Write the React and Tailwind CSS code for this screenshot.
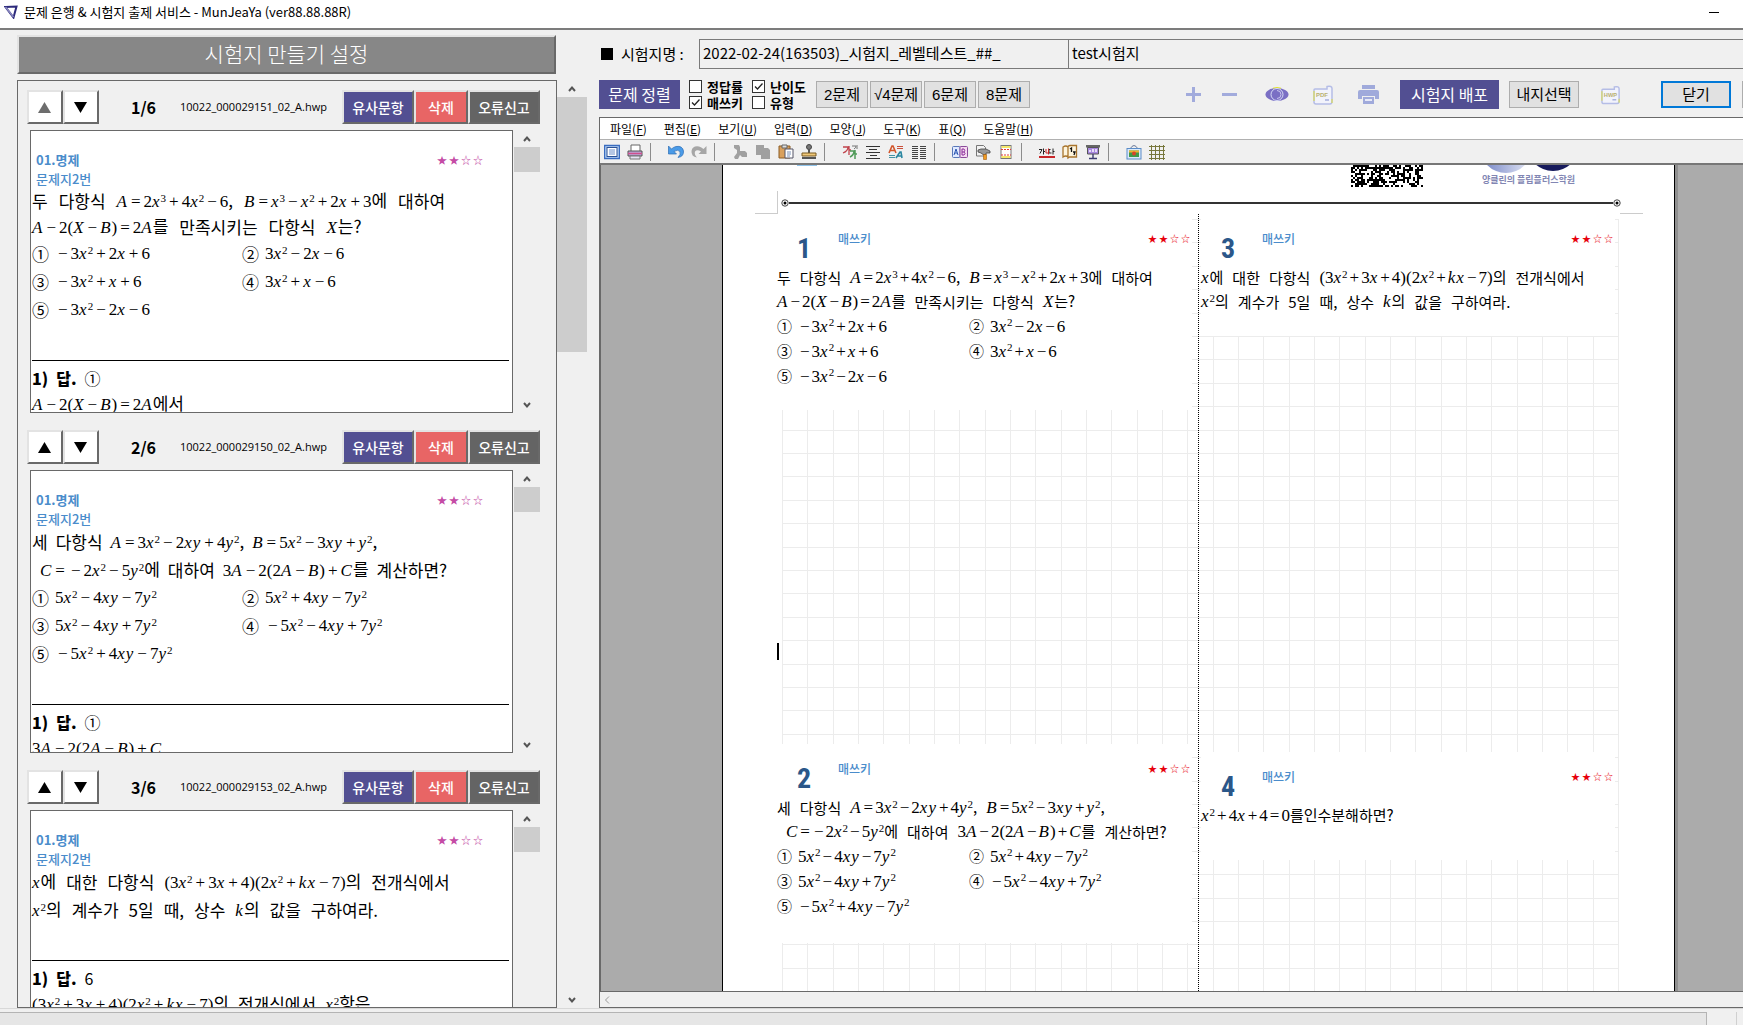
import React from "react";

const UI = "font-['Noto_Sans_CJK_KR','Noto_Sans',sans-serif]";

/* ---------- math text ---------- */

function MathRun({ src, op }) {
  const out = [];
  for (let i = 0; i < src.length; i++) {
    const c = src[i];
    if (c === "^") {
      i++;
      out.push(
        <sup key={i} className="text-[11px]">
          {src[i]}
        </sup>
      );
    } else if (/[A-Za-z]/.test(c)) {
      out.push(
        <i key={i} className="pr-px">
          {c}
        </i>
      );
    } else if ("+-=".includes(c)) {
      out.push(
        <span key={i} className={op}>
          {c === "-" ? "−" : c}
        </span>
      );
    } else {
      out.push(c);
    }
  }
  return <span className="font-['Liberation_Serif',serif] text-[17px]">{out}</span>;
}

/* Words are separated by spaces; {…} marks a formula. */
function Line({ text, op, className = "" }) {
  return (
    <p className={"flex items-center whitespace-nowrap " + className}>
      {text.split(" ").map((w, i) => (
        <span key={i}>
          {w.split(/[{}]/).map((part, j) => (j % 2 ? <MathRun key={j} src={part} op={op} /> : part))}
        </span>
      ))}
    </p>
  );
}

const CIRCLED = ["①", "②", "③", "④", "⑤"];

function Options({ items, op, className }) {
  return (
    <ol className={"grid " + className}>
      {items.map((t, i) => (
        <li key={i} className="flex items-center gap-[6px] whitespace-nowrap">
          <span>{CIRCLED[i]}</span>
          <MathRun src={t} op={op} />
        </li>
      ))}
    </ol>
  );
}

function Stars({ className }) {
  return (
    <span className={"flex gap-[2px] leading-4 " + className} aria-label="난이도 2">
      {["★", "★", "☆", "☆"].map((s, i) => (
        <span key={i}>{s}</span>
      ))}
    </span>
  );
}

const Q1 = {
  lines: ["두 다항식 {A=2x^3+4x^2-6}, {B=x^3-x^2+2x+3}에 대하여", "{A-2(X-B)=2A}를 만족시키는 다항식 {X}는?"],
  options: ["-3x^2+2x+6", "3x^2-2x-6", "-3x^2+x+6", "3x^2+x-6", "-3x^2-2x-6"],
};
const Q2 = {
  lines: ["세 다항식 {A=3x^2-2xy+4y^2}, {B=5x^2-3xy+y^2},", " {C=-2x^2-5y^2}에 대하여 {3A-2(2A-B)+C}를 계산하면?"],
  options: ["5x^2-4xy-7y^2", "5x^2+4xy-7y^2", "5x^2-4xy+7y^2", "-5x^2-4xy+7y^2", "-5x^2+4xy-7y^2"],
};
const Q3 = {
  lines: ["{x}에 대한 다항식 {(3x^2+3x+4)(2x^2+kx-7)}의 전개식에서", "{x^2}의 계수가 5일 때, 상수 {k}의 값을 구하여라."],
  options: [],
};
const Q4 = { lines: ["{x^2+4x+4=0}를인수분해하면?"], options: [] };

/* ---------- left panel ---------- */

const BEVEL = "border-2 border-t-[#e3e3e3] border-l-[#e3e3e3] border-r-[#696969] border-b-[#696969]";

function Chevron({ down }) {
  return (
    <svg width="8" height="6" viewBox="0 0 8 6" fill="none" stroke="#555" strokeWidth="2">
      <path d={down ? "M1 1l3 3.4L7 1" : "M1 5l3-3.4L7 5"} />
    </svg>
  );
}

function ScrollRail({ className, thumb }) {
  return (
    <div className={"flex shrink-0 flex-col bg-[#f0f0f0] " + className}>
      <button type="button" aria-label="위로 스크롤" className="flex h-[17px] shrink-0 items-center justify-center">
        <Chevron />
      </button>
      <div className={"bg-[#cdcdcd] " + thumb} />
      <button type="button" aria-label="아래로 스크롤" className="mt-auto flex h-[17px] shrink-0 items-center justify-center">
        <Chevron down />
      </button>
    </div>
  );
}

function QuestionCard({ index, file, q, lineClass, gap, answer, solution }) {
  return (
    <section className="mb-[17px] shrink-0">
      <div className="flex h-[34px] items-center">
        <button type="button" aria-label="위로 이동" className={"flex h-full w-9 items-center justify-center bg-white pr-px " + BEVEL}>
          <svg width="13" height="11" viewBox="0 0 13 11">
            <path d="M6.500 0L13 11H0z" fill={index === 1 ? "#6d6d6d" : "#000"} />
          </svg>
        </button>
        <button type="button" aria-label="아래로 이동" className={"flex h-full w-9 items-center justify-center bg-white pr-px " + BEVEL}>
          <svg width="13" height="11" viewBox="0 0 13 11">
            <path d="M6.500 11L13 0H0z" fill="#000" />
          </svg>
        </button>
        <span className="w-[81px] pl-2 text-center text-base leading-5 font-bold">{index}/6</span>
        <span className="flex-1 text-[11px] leading-4 whitespace-nowrap font-['Open_Sans',sans-serif]">{file}</span>
        <button type="button" className={"h-full w-[72px] bg-[#524f92] text-sm leading-4 font-medium text-white " + BEVEL}>유사문항</button>
        <button type="button" className={"h-full w-[54px] bg-[#e86565] text-sm leading-4 font-medium text-white " + BEVEL}>삭제</button>
        <button type="button" className={"h-full w-[72px] bg-[#646464] text-sm leading-4 font-medium text-white " + BEVEL}>오류신고</button>
      </div>
      <div className="mt-[6px] flex h-[283px] pl-[3px]">
        <article className="flex-1 overflow-hidden border border-[#696969] bg-white pt-[19px] pr-[3px] pl-px text-[17px]">
          <div className="flex h-[19px] items-center justify-between pr-[26px] pl-1">
            <span className="text-[13px] leading-4 font-bold text-[#4a8ccb]">01.명제</span>
            <Stars className="text-[10px] text-[#c44ba5]" />
          </div>
          <div className="flex h-[19px] items-center pl-1 text-[13px] leading-4 font-medium text-[#4a8ccb]">문제지2번</div>
          {q.lines.map((t, i) => (
            <Line key={i} text={t} op="px-[3px]" className={lineClass} />
          ))}
          <Options items={q.options} op="px-[3px]" className="auto-rows-[28px] grid-cols-[210px_1fr]" />
          <hr className={"mb-1 border-black " + gap} />
          <p className="flex h-[26px] items-center gap-2 text-base">
            <b className="font-black">1)</b>
            <b className="font-black">답.</b>
            <span>{answer}</span>
          </p>
          <Line text={solution} op="px-[3px]" className="h-[26px] gap-[9px]" />
        </article>
        <ScrollRail className="w-[27px] pl-px" thumb="h-[25px]" />
      </div>
    </section>
  );
}

/* ---------- top tool icons ---------- */

function DocIcon({ label }) {
  return (
    <svg width="21" height="20" viewBox="0 0 21 20" fill="none">
      <path d="M2 4h12V1.500q5-1 5 2V16q0 3-2 3H3q-2 0-2-2V5q0-1 1-1z" fill="#f2f3fb" stroke="#b5bde6" strokeWidth="1.500" />
      <path d="M1 6v10M19 14v4" stroke="#dede3c" />
      <text x="3" y="12" fontSize="6" fontWeight="700" fill="#b9b070" fontFamily="Liberation Sans">{label}</text>
      <path d="M12 15h4" stroke="#a5aedd" strokeWidth="1.500" />
    </svg>
  );
}

function Tool({ label, className, children }) {
  return (
    <button type="button" aria-label={label} className={"flex h-7 shrink-0 items-center justify-center " + className}>
      {children}
    </button>
  );
}

function Check({ id, label, checked }) {
  return (
    <label htmlFor={id} className="flex h-4 items-center gap-[5px] text-[13px] leading-4 font-bold whitespace-nowrap">
      <span className="relative flex">
        <input id={id} type="checkbox" defaultChecked={checked} className="peer size-[13px] appearance-none border border-[#333] bg-white" />
        <svg viewBox="0 0 13 13" className="pointer-events-none absolute inset-0 hidden size-[13px] peer-checked:block" fill="none" stroke="#222" strokeWidth="1.300">
          <path d="M3 6.500l2.500 2.500L10.500 3.500" />
        </svg>
      </span>
      {label}
    </label>
  );
}

/* ---------- editor toolbar ---------- */

const ICONS = {
  view: (
    <>
      <rect x="0.500" y="1.500" width="15" height="13" fill="#b9d4f5" stroke="#3a6cc0" strokeWidth="1.500" />
      <rect x="3" y="3.500" width="10" height="9" fill="#fff" stroke="#2b5196" />
      <path d="M5 6h6M5 8h6M5 10h6" stroke="#6c8fc9" />
    </>
  ),
  print: (
    <>
      <path d="M4 7V1h9v6" fill="#fff" stroke="#666" />
      <path d="M1 7h14v5H1z" fill="#b9a9d8" stroke="#555" />
      <path d="M1 9.500h14" stroke="#d0508c" strokeWidth="1.500" />
      <path d="M3 12h10v3H3z" fill="#e5e5f2" stroke="#777" />
    </>
  ),
  undo: <path d="M0.500 2v8h8L6 7.500q4-2.500 6 0 1 3-2 6 6-1 5.500-6.500Q14.500 1.500 8 2.500 5.500 3 3.500 5z" fill="#4a9be8" stroke="#2d6db5" strokeWidth="0.700" />,
  redo: <path d="M15.500 2v8h-8L10 7.500q-4-2.500-6 0-1 3 2 6-6-1-5.500-6.500Q1.500 1.500 8 2.500q2.500 0.500 4.500 2.500z" fill="#a6a6a6" />,
  cut: <path d="M2 1h5l1 2v4h5l2 2v4h-5l-2-2-2 4H3l-1-2 3-4V6L2 4z" fill="#a0a0a0" />,
  copy: <path d="M1 1h8v3h4l2 2v9H6v-4H1z" fill="#a0a0a0" />,
  paste: (
    <>
      <path d="M1 2h11v12H1z" fill="#d9a05c" stroke="#8c5c24" />
      <path d="M4 1h5v3H4z" fill="#ddd" stroke="#666" />
      <path d="M7 5h8v9H7z" fill="#fff" stroke="#556" />
      <path d="M9 8h4M9 10h4M9 12h3" stroke="#7b8fb5" />
    </>
  ),
  stamp: (
    <>
      <circle cx="8" cy="3" r="2.500" fill="#777" stroke="#444" />
      <path d="M7 5h2v4H7z" fill="#555" />
      <path d="M1 9h14v3H1z" fill="#f0c878" stroke="#7a5a20" />
      <path d="M1 14h14" stroke="#555" strokeWidth="2" />
    </>
  ),
  char: (
    <>
      <path d="M1 3h5q0 4-5 6M7 2v9M7 6h2" stroke="#c0434c" strokeWidth="1.300" fill="none" />
      <path d="M8 7h4q0 4-4 6M13 6v9M13 10h2" stroke="#4f9a58" strokeWidth="1.500" fill="none" />
      <path d="M10 2h4q0 2-2 3M15 1v4" stroke="#777" fill="none" />
    </>
  ),
  para: <path d="M1 2.500h14M4 5.500h8M1 8.500h14M5 11.500h7M1 14.500h14" stroke="#333" />,
  style: (
    <>
      <path d="M1 9L4 2h1l3 7M2.500 6.500h4" stroke="#d2562b" strokeWidth="1.600" fill="none" />
      <path d="M8 14l4-6h1l1 6M10 12h4" stroke="#2a86a0" strokeWidth="1.600" fill="none" />
      <path d="M9 2.500h6M9 4.500h6" stroke="#c9503a" />
      <path d="M1 11.500h6M1 13.500h6" stroke="#4594a5" />
    </>
  ),
  columns: <path d="M1 2.500h6M1 4.500h6M1 6.500h6M1 8.500h6M1 10.500h6M1 12.500h6M1 14.500h6M9 2.500h6M9 4.500h6M9 6.500h6M9 8.500h6M9 10.500h6M9 12.500h6M9 14.500h6" stroke="#444" />,
  ab: (
    <>
      <rect x="0.500" y="2.500" width="7.500" height="11" rx="1" fill="#dfeaff" stroke="#5a78b8" />
      <rect x="8" y="2.500" width="7.500" height="11" rx="1" fill="#f5d9f0" stroke="#8a4a9a" />
      <path d="M2 11l2-6 2 6M3 9h2" stroke="#2a55b0" fill="none" />
      <path d="M10 5v6h2q2-1.500 0-3 1.500-1.500 0-3zM10 8h2" stroke="#8a2f9a" fill="none" />
    </>
  ),
  hammer: (
    <>
      <path d="M1.500 1.500h7l2 2V12h-9z" fill="#f2f2f2" stroke="#777" />
      <path d="M3 6l3-1h5l4 2v2h-4v1.500H8L6 9 3 8z" fill="#999" stroke="#444" strokeWidth="0.800" />
      <path d="M8.500 10.500h3v5h-3z" fill="#f09a20" stroke="#a05a10" strokeWidth="0.600" />
    </>
  ),
  page: (
    <>
      <rect x="3" y="1.500" width="10" height="13" fill="#fff" stroke="#777" />
      <path d="M3.500 2h9v2h-9zM3.500 12h9v2h-9z" fill="#f5e86a" />
      <path d="M3 5.500h10M3 11h10" stroke="#e03c3c" strokeDasharray="2 1" />
    </>
  ),
  spell: (
    <>
      <path d="M0 5.500h3l-2 4M4.500 4.500v6M4.500 7.500h1.500M11.500 5.500h-1.500v3.500h2.500M14 4.500v6M14 7.500h1.500" stroke="#222" fill="none" />
      <path d="M7 5v4h2M9.500 4.500v6" stroke="#c22" fill="none" />
      <path d="M0 13h16" stroke="#c8262a" strokeWidth="2" />
    </>
  ),
  book: (
    <>
      <path d="M1 3q3-2 5 0v10q-2-2-5 0zM6 2.500q1-1 2-1h6.500V13H7.500l-1.500 1z" fill="#fdf4dc" stroke="#a8742c" strokeWidth="1.300" />
      <path d="M8 5l1.500-1v4M11 8h2l-1 3" stroke="#111" strokeWidth="1.300" fill="none" />
    </>
  ),
  board: (
    <>
      <path d="M1 1h14v2.500H1z" fill="#666" />
      <path d="M2.500 3.500h11V10h-11z" fill="#a887e0" stroke="#555" />
      <path d="M5 8V6M8 8V5M11 8V5" stroke="#fff" strokeWidth="1.400" />
      <path d="M8 10v4M4 14.500h8" stroke="#3c3c70" strokeWidth="1.400" />
    </>
  ),
  picture: (
    <>
      <path d="M4 5q4-7 8 0" stroke="#6a7a9a" fill="none" />
      <rect x="1" y="4.500" width="14" height="10.500" fill="#dbeafa" stroke="#5a8cc8" />
      <path d="M3 6.500h10V13H3z" fill="#3f9a48" />
      <path d="M3 6.500h10v2H3z" fill="#f0b030" />
      <circle cx="8" cy="9.500" r="2" fill="#d8432a" />
    </>
  ),
  grid: <path d="M2.500 1v15M6.500 1v15M10.500 1v15M14.500 1v15M0 2.500h16M0 6.500h16M0 10.500h16M0 14.500h16" stroke="#77773c" />,
};

const GROUPS = [
  ["view", "print"],
  ["undo", "redo"],
  ["cut", "copy", "paste", "stamp"],
  ["char", "para", "style", "columns"],
  ["ab", "hammer", "page"],
  ["spell", "book", "board"],
  ["picture", "grid"],
];

const MENUS = [
  ["파일", "F"],
  ["편집", "E"],
  ["보기", "U"],
  ["입력", "D"],
  ["모양", "J"],
  ["도구", "K"],
  ["표", "Q"],
  ["도움말", "H"],
];

/* ---------- page ---------- */

function GraphPaper() {
  const cols = Array.from({ length: 34 }, (_, i) => Math.round((i * 76) / 3) + 0.5);
  const rows = Array.from({ length: 40 }, (_, i) => Math.round((i * 117) / 5) + 0.5);
  return (
    <svg className="absolute top-[5px] left-[5px]" width="837" height="900" stroke="#ececec" aria-hidden="true">
      {cols.map((x) => (
        <path key={"c" + x} d={`M${x} 0V900`} />
      ))}
      {rows.map((y) => (
        <path key={"r" + y} d={`M0 ${y}H837`} />
      ))}
    </svg>
  );
}

function QrCode() {
  let s = 12345;
  const cells = [];
  for (let y = 0; y < 11; y++)
    for (let x = 0; x < 36; x++) {
      s = (s * 1103515245 + 12345) % 2147483648;
      if ((s >> 12) % 100 < 53) cells.push(`M${x * 2} ${y * 2}h2v2h-2z`);
    }
  return (
    <svg width="73" height="22" viewBox="0 0 73 22" shapeRendering="crispEdges" aria-label="QR">
      <path d={cells.join("")} />
    </svg>
  );
}

function LineEnd() {
  return (
    <svg width="8" height="8" viewBox="0 0 8 8" className="shrink-0">
      <circle cx="4" cy="4" r="3.200" fill="#fff" stroke="#444" />
      <circle cx="4" cy="4" r="1.500" />
    </svg>
  );
}

function PageQuestion({ number, q, className }) {
  return (
    <article className={"bg-white text-[15px] " + className}>
      <div className="flex h-[52px] items-start pt-[17px]">
        <span className="w-[61px] pt-1 pl-5 text-[28px] leading-7 font-bold text-[#2b5789] font-['Liberation_Sans_Narrow','Roboto_Condensed','Liberation_Sans',sans-serif]">{number}</span>
        <span className="text-xs leading-4 font-medium text-[#4a8ccb]">매쓰키</span>
        <Stars className="mr-[2px] ml-auto text-[9px] text-red-600" />
      </div>
      {q.lines.map((t, i) => (
        <Line key={i} text={t} op="px-[2px]" className="h-6 gap-[9px]" />
      ))}
      <Options items={q.options} op="px-[2px]" className="auto-rows-[25px] grid-cols-[192px_1fr]" />
    </article>
  );
}

export default function App() {
  return (
    <div className={"flex h-screen flex-col overflow-hidden bg-[#f0f0f0] text-black " + UI}>
      <header className="flex h-[30px] shrink-0 items-center border-b-2 border-[#7c7c7c] bg-white pb-1 pl-1">
        <svg width="14" height="14" viewBox="0 0 14 14" fill="none">
          <path d="M1.500 2L12.500 1.500 9.500 12.500z" stroke="#2d2a7c" strokeWidth="2" />
          <path d="M1.500 2l8 10" stroke="#8a88c0" strokeWidth="1.500" />
        </svg>
        <h1 className="ml-[6px] text-[13px] leading-4">문제 은행 &amp; 시험지 출제 서비스 - MunJeaYa (ver88.88.88R)</h1>
        <button type="button" aria-label="최소화" className="mr-6 ml-auto flex size-[10px] items-center">
          <span className="h-px w-full bg-black" />
        </button>
      </header>

      <main className="flex min-h-0 flex-1">
        <aside className="flex w-[599px] shrink-0 flex-col pt-[5px] pl-[17px]">
          <h2 className={"flex h-[39px] w-[539px] shrink-0 items-center justify-center bg-[#878787] pb-[3px] text-[21px] leading-7 font-light text-white " + BEVEL}>
            시험지 만들기 설정
          </h2>
          <div className="mt-[6px] flex min-h-0 flex-1">
            <div className="flex w-[540px] flex-col overflow-hidden border border-[#696969] pt-[9px] pr-4 pl-[9px]">
              <QuestionCard index={1} file="10022_000029151_02_A.hwp" q={Q1} lineClass="h-[26px] gap-[11px]" gap="mt-9" answer="①" solution="{A-2(X-B)=2A}에서" />
              <QuestionCard index={2} file="10022_000029150_02_A.hwp" q={Q2} lineClass="h-7 gap-2" gap="mt-9" answer="①" solution="{3A-2(2A-B)+C}" />
              <QuestionCard index={3} file="10022_000029153_02_A.hwp" q={Q3} lineClass="h-7 gap-[10px]" gap="mt-9" answer="6" solution="{(3x^2+3x+4)(2x^2+kx-7)}의 전개식에서 {x^2}항은" />
            </div>
            <ScrollRail className="w-[30px]" thumb="h-[255px]" />
          </div>
        </aside>

        <section className="flex min-w-0 flex-1 flex-col">
          <div className="mb-[2px] flex h-12 shrink-0 items-center">
            <span className="ml-[2px] size-3 shrink-0 bg-black" />
            <label htmlFor="paper-name" className="w-[86px] shrink-0 pl-2 text-[15px] leading-5">시험지명 :</label>
            <input id="paper-name" defaultValue="2022-02-24(163503)_시험지_레벨테스트_##_" className="h-[30px] w-[370px] shrink-0 border border-[#7a7a7a] bg-[#f0f0f0] px-[3px] pb-1 text-[15px]" />
            <input aria-label="시험지 부제" defaultValue="test시험지" className="-ml-px h-[30px] min-w-0 flex-1 border border-r-0 border-[#7a7a7a] bg-[#f0f0f0] px-[3px] pb-1 text-[15px]" />
          </div>

          <div className="flex h-[29px] shrink-0 items-center">
            <button type="button" className="h-[29px] w-[81px] shrink-0 bg-[#524f92] pb-[2px] text-base leading-5 text-white">문제 정렬</button>
            <div className="ml-[9px] grid w-[127px] shrink-0 grid-cols-[63px_64px]">
              <Check id="c1" label="정답률" />
              <Check id="c2" label="난이도" checked />
              <Check id="c3" label="매쓰키" checked />
              <Check id="c4" label="유형" />
            </div>
            <div className="flex shrink-0 gap-[2px]">
              {["2문제", "√4문제", "6문제", "8문제"].map((t) => (
                <button key={t} type="button" className="flex h-[27px] w-[52px] items-center justify-center border border-[#adadad] bg-[#e1e1e1] font-['Liberation_Sans','Noto_Sans_CJK_KR',sans-serif] text-[15px] leading-5 whitespace-nowrap">
                  {t}
                </button>
              ))}
            </div>
            <div className="min-w-0 flex-1" />
            <Tool label="추가" className="w-9">
              <svg width="15" height="15" viewBox="0 0 15 15" stroke="#a2abdc" strokeWidth="3">
                <path d="M7.500 0v15M0 7.500h15" />
              </svg>
            </Tool>
            <Tool label="제거" className="w-9">
              <svg width="15" height="15" viewBox="0 0 15 15" stroke="#a2abdc" strokeWidth="3">
                <path d="M0 7.500h15" />
              </svg>
            </Tool>
            <Tool label="미리보기" className="ml-[7px] w-[46px]">
              <svg width="24" height="15" viewBox="0 0 24 15">
                <ellipse cx="12" cy="7.500" rx="11.500" ry="6.500" fill="#7a6fc4" />
                <path d="M8 1.200q4-1.500 8 0" stroke="#e0e030" fill="none" />
                <circle cx="12" cy="7.500" r="6" fill="#7a6fc4" stroke="#d8dcf6" />
                <path d="M12 3.500a4 4 0 010 8" stroke="#c9c4ee" fill="none" />
              </svg>
            </Tool>
            <Tool label="PDF 저장" className="w-[46px]">
              <DocIcon label="PDF" />
            </Tool>
            <Tool label="인쇄" className="w-[45px]">
              <svg width="21" height="19" viewBox="0 0 21 19" fill="#a0aadb">
                <path d="M4 0h13v4H4zM2 5h17q2 0 2 2v7h-4v-3H4v3H0V7q0-2 2-2z" />
                <path d="M5 12h11v7H5z" />
                <path d="M7 14h7v2H7z" fill="#e8eaf8" />
              </svg>
            </Tool>
            <button type="button" className="ml-[9px] h-[29px] w-[99px] shrink-0 bg-[#524f92] pb-[2px] text-base leading-5 text-white">시험지 배포</button>
            <button type="button" className="ml-[10px] h-[27px] w-[70px] shrink-0 border border-[#adadad] bg-[#e1e1e1] pb-[2px] text-[15px] leading-5">내지선택</button>
            <Tool label="HWP 저장" className="mr-5 ml-[22px] w-5">
              <DocIcon label="HWP" />
            </Tool>
            <button type="button" className="ml-5 h-[27px] w-[70px] shrink-0 border-2 border-[#0078d7] bg-[#e1e1e1] pb-[2px] text-[15px] leading-5">닫기</button>
            <span className="ml-[11px] h-[27px] w-px shrink-0 bg-[#adadad]" />
          </div>

          <div className="mt-2 flex min-h-0 flex-1 flex-col border-t border-l border-[#696969]">
            <nav className="flex h-[22px] shrink-0 items-center gap-[17px] border-b border-[#b0b0b0] bg-white pl-[10px]">
              {MENUS.map(([t, k]) => (
                <button key={k} type="button" className="text-xs leading-4 whitespace-nowrap">
                  {t}({<u>{k}</u>})
                </button>
              ))}
            </nav>
            <div className="flex h-[25px] shrink-0 items-center border-b-2 border-[#777] pl-1">
              {GROUPS.map((g, i) => (
                <React.Fragment key={i}>
                  {i > 0 && <span className="mr-[17px] ml-[7px] h-[18px] w-px shrink-0 bg-[#8c8c8c]" />}
                  <div className="flex gap-[7px]">
                    {g.map((n) => (
                      <button key={n} type="button" aria-label={n} className="size-4 shrink-0">
                        <svg width="16" height="16" viewBox="0 0 16 16">
                          {ICONS[n]}
                        </svg>
                      </button>
                    ))}
                  </div>
                </React.Fragment>
              ))}
            </div>

            <div className="flex min-h-0 flex-1 overflow-hidden border-b border-l border-[#696969] bg-[#ababab]">
              <div className="relative mr-[68px] ml-[121px] flex min-w-0 flex-1 flex-col border-x border-black bg-white shadow-[3px_0_0_#8f8f8f]">
                <div className="flex h-[22px] shrink-0 items-start pr-[99px] pl-[74px]">
                  <span className="h-px w-5 bg-[#8fc3ea]" />
                  <div className="mr-[58px] ml-auto">
                    <QrCode />
                  </div>
                  <div className="flex flex-col items-center">
                    <svg width="88" height="9" viewBox="0 0 88 9">
                      <defs>
                        <linearGradient id="orb">
                          <stop offset="0" stopColor="#6f80c4" />
                          <stop offset="1" stopColor="#e8ebf7" />
                        </linearGradient>
                      </defs>
                      <circle cx="22" cy="-18" r="26" fill="url(#orb)" />
                      <circle cx="69" cy="-20" r="26" fill="#171a5c" />
                    </svg>
                    <span className="text-[9px] leading-3 font-bold whitespace-nowrap text-[#8286b3]">양클린의 플립플러스학원</span>
                  </div>
                </div>
                <div className="flex h-[27px] shrink-0 items-center pt-[5px] pr-[53px] pl-[58px]">
                  <LineEnd />
                  <span className="h-[2px] flex-1 bg-[#333]" />
                  <LineEnd />
                </div>
                <span className="absolute top-[26px] left-8 h-[23px] w-[23px] border-r border-b border-[#ccc]" />
                <span className="absolute top-[48px] right-[31px] h-px w-[23px] bg-[#ccc]" />

                <div className="relative mr-[55px] ml-[54px] grid flex-1 grid-cols-2">
                  <GraphPaper />
                  <div className="relative">
                    <PageQuestion number={1} q={Q1} className="mr-[6px] h-[196px]" />
                    <div className="h-[334px] pt-[233px]">
                      <span className="block h-[17px] w-[2px] bg-black" />
                    </div>
                    <PageQuestion number={2} q={Q2} className="mr-[6px] h-[199px]" />
                  </div>
                  <div className="relative border-l border-dotted border-black">
                    <PageQuestion number={3} q={Q3} className="mr-1 ml-[2px] h-[122px]" />
                    <div className="h-[416px]" />
                    <PageQuestion number={4} q={Q4} className="mr-1 ml-[2px] h-[108px]" />
                  </div>
                </div>
              </div>
            </div>
            <div className="flex h-4 shrink-0 items-center border-b border-[#696969] pl-1">
              <button type="button" aria-label="왼쪽으로 스크롤" className="flex h-3 w-3 items-center">
                <svg width="6" height="8" viewBox="0 0 6 8" fill="none" stroke="#999">
                  <path d="M5 0.500L1.500 4 5 7.500" />
                </svg>
              </button>
            </div>
          </div>
        </section>
      </main>

      <footer className="flex h-[17px] shrink-0 border-t border-[#d8d8d8] pt-[3px]">
        <div className="flex-1 border-t border-r border-[#b4b4b4] bg-[#e6e6e6]" />
        <div className="w-[30px] border-r border-[#d0d0d0]" />
        <div className="w-[6px]" />
      </footer>
    </div>
  );
}
